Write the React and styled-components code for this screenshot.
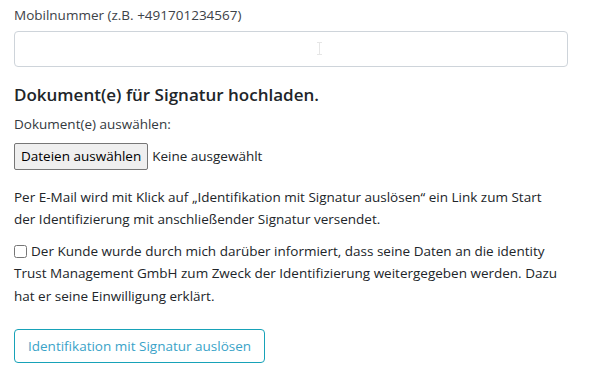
import styled, { createGlobalStyle } from "styled-components";

const GlobalStyle = createGlobalStyle`
  html, body {
    margin: 0;
    padding: 0;
    background: #fff;
  }
  body {
    font-family: "Open Sans", "Noto Sans", sans-serif;
    font-size: 14px;
    line-height: 1.5;
    color: #212529;
  }
`;

const Page = styled.div`
  width: 554px;
  padding: 5px 0 0 14px;
`;

const FieldGroup = styled.div`
  display: flex;
  flex-direction: column;
  margin-bottom: 16px;
`;

const Label = styled.label`
  display: block;
  color: ${(p) => p.$color || "#343a40"};
  margin-bottom: ${(p) => p.$gap || "6px"};
  font-size: 13.5px;
`;

const InputWrap = styled.div`
  position: relative;
`;

const Input = styled.input`
  box-sizing: border-box;
  display: block;
  width: 100%;
  height: 36px;
  border: 1px solid #ced4da;
  border-radius: 4px;
  padding: 6px 12px;
  font: inherit;
  outline: none;
`;

const Cursor = styled.svg`
  position: absolute;
  left: 303px;
  top: 11px;
`;

const Heading = styled.h5`
  margin: 0 0 8px;
  font-size: 17px;
  font-weight: 600;
  line-height: 23px;
  color: #212529;
`;

const FileRow = styled.div`
  display: flex;
  align-items: center;
  gap: 4px;
  font-size: 13.5px;
  margin-bottom: 16px;
`;

const FileButton = styled.button`
  height: 27px;
  padding: 0 6px;
  background: #efefef;
  border: 1px solid #767676;
  border-radius: 2px;
  font: inherit;
  color: #000;
`;

const Text = styled.p`
  margin: 0 0 10px;
  font-size: 13.5px;
  line-height: 22px;
  color: #212529;
`;

const CheckLabel = styled.label`
  display: block;
  font-size: 13.5px;
  line-height: 22.5px;
  margin-bottom: 22px;
`;

const Check = styled.input`
  width: 13px;
  height: 13px;
  margin: 0 4px 0 0;
  vertical-align: -2px;
`;

const SubmitButton = styled.button`
  height: 34px;
  padding: 0 13px;
  background: #fff;
  color: #3aa3c8;
  border: 1px solid #17a2b8;
  border-radius: 4px;
  font: inherit;
  font-size: 13.5px;
`;

export default function App() {
  return (
    <>
      <GlobalStyle />
      <Page>
        <FieldGroup>
          <Label $color="#3d4248">Mobilnummer (z.B. +491701234567)</Label>
          <InputWrap>
            <Input type="text" />
            <Cursor width="5" height="13" viewBox="0 0 5 13">
              <path d="M0 0.5h5M0 12.5h5M2.5 0.5v12" stroke="#e6e6e6" strokeWidth="1" fill="none" />
            </Cursor>
          </InputWrap>
        </FieldGroup>
        <Heading>Dokument(e) für Signatur hochladen.</Heading>
        <Label $gap="8px">Dokument(e) auswählen:</Label>
        <FileRow>
          <FileButton type="button">Dateien auswählen</FileButton>
          <span>Keine ausgewählt</span>
        </FileRow>
        <Text>
          Per E-Mail wird mit Klick auf „Identifikation mit Signatur auslösen“ ein Link zum Start
          <br />
          der Identifizierung mit anschließender Signatur versendet.
        </Text>
        <CheckLabel>
          <Check type="checkbox" />
          Der Kunde wurde durch mich darüber informiert, dass seine Daten an die identity
          Trust Management GmbH zum Zweck der Identifizierung weitergegeben werden. Dazu
          hat er seine Einwilligung erklärt.
        </CheckLabel>
        <SubmitButton type="button">Identifikation mit Signatur auslösen</SubmitButton>
      </Page>
    </>
  );
}
